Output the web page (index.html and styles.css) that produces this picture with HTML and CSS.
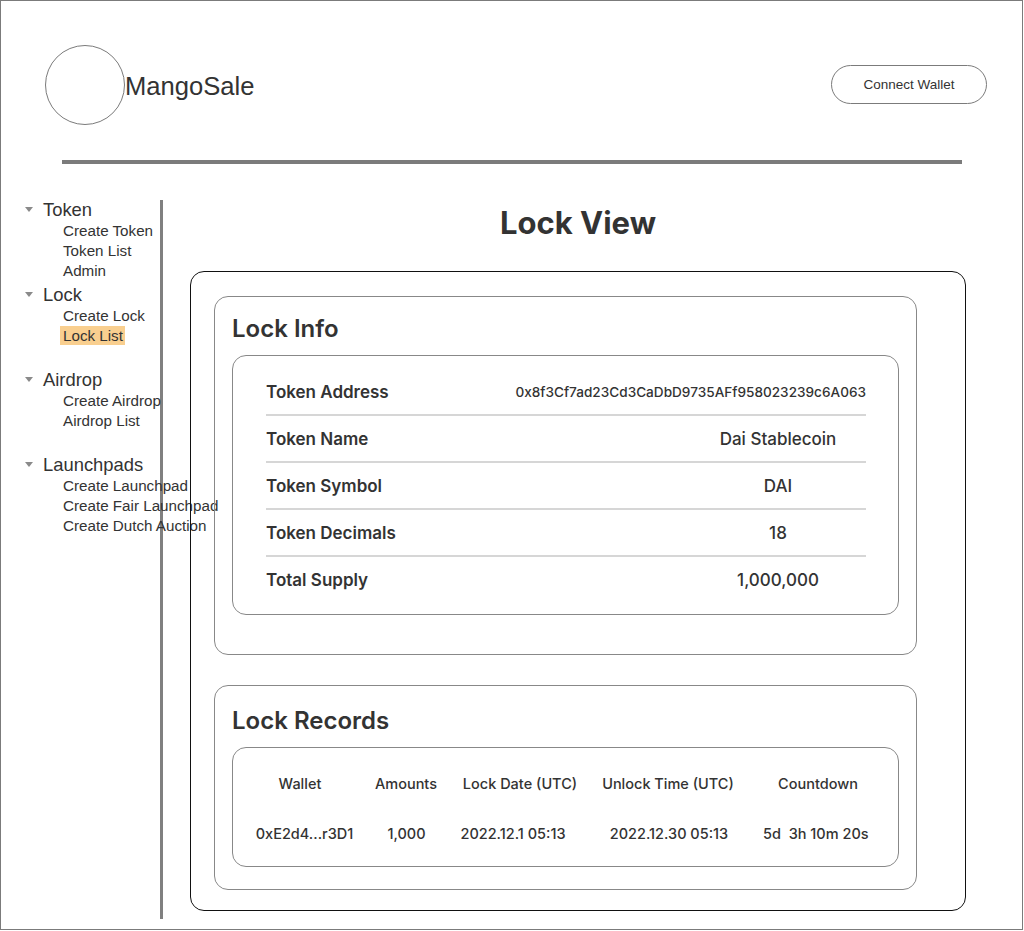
FILE: index.html
```html
<!DOCTYPE html>
<html lang="en">
<head>
<meta charset="utf-8">
<title>MangoSale - Lock View</title>
<link rel="stylesheet" href="styles.css">
</head>
<body>
<div class="frame">
  <header class="header">
    <div class="brand">
      <div class="logo"></div>
      <span class="brand-name">MangoSale</span>
    </div>
    <button class="connect">Connect Wallet</button>
  </header>
  <div class="rule"></div>
  <div class="body">
    <nav class="sidebar">
      <div class="group">
        <div class="group-title"><span class="caret"></span>Token</div>
        <div class="item">Create Token</div>
        <div class="item">Token List</div>
        <div class="item">Admin</div>
      </div>
      <div class="group">
        <div class="group-title"><span class="caret"></span>Lock</div>
        <div class="item">Create Lock</div>
        <div class="item"><span class="active">Lock List</span></div>
      </div>
      <div class="group">
        <div class="group-title"><span class="caret"></span>Airdrop</div>
        <div class="item">Create Airdrop</div>
        <div class="item">Airdrop List</div>
      </div>
      <div class="group">
        <div class="group-title"><span class="caret"></span>Launchpads</div>
        <div class="item">Create Launchpad</div>
        <div class="item">Create Fair Launchpad</div>
        <div class="item">Create Dutch Auction</div>
      </div>
    </nav>
    <main class="main">
      <h1 class="title">Lock View</h1>
      <div class="outer-card">
        <section class="card card-info">
          <h2 class="card-title">Lock Info</h2>
          <div class="box info-box">
            <div class="info-row">
              <span class="label">Token Address</span>
              <span class="value addr">0x8f3Cf7ad23Cd3CaDbD9735AFf958023239c6A063</span>
            </div>
            <div class="info-row">
              <span class="label">Token Name</span>
              <span class="value">Dai Stablecoin</span>
            </div>
            <div class="info-row">
              <span class="label">Token Symbol</span>
              <span class="value">DAI</span>
            </div>
            <div class="info-row">
              <span class="label">Token Decimals</span>
              <span class="value">18</span>
            </div>
            <div class="info-row">
              <span class="label">Total Supply</span>
              <span class="value">1,000,000</span>
            </div>
          </div>
        </section>
        <section class="card card-records">
          <h2 class="card-title">Lock Records</h2>
          <div class="box records-box">
            <div class="rec-row rec-head">
              <span>Wallet</span>
              <span>Amounts</span>
              <span>Lock Date (UTC)</span>
              <span>Unlock Time (UTC)</span>
              <span>Countdown</span>
            </div>
            <div class="rec-row rec-data">
              <span>0xE2d4...r3D1</span>
              <span>1,000</span>
              <span>2022.12.1 05:13</span>
              <span>2022.12.30 05:13</span>
              <span>5d&nbsp; 3h 10m 20s</span>
            </div>
          </div>
        </section>
      </div>
    </main>
  </div>
</div>
</body>
</html>
```

FILE: styles.css
```css
* { box-sizing: border-box; }

body {
  margin: 0;
  font-family: "Liberation Sans", Arial, sans-serif;
  color: #333;
  background: #fff;
}

.frame {
  width: 1023px;
  height: 930px;
  border: 1px solid #7b7b7b;
  overflow: hidden;
}

/* Header */
.header {
  display: flex;
  align-items: center;
  justify-content: space-between;
  padding: 44px 35px 0 44px;
}

.brand {
  display: flex;
  align-items: center;
}

.logo {
  width: 80px;
  height: 80px;
  border: 1px solid #7b7b7b;
  border-radius: 50%;
}

.brand-name {
  font-size: 25.6px;
  color: #333;
  margin-left: 0;
  margin-top: 2px;
}

.connect {
  width: 156px;
  height: 39px;
  border: 1px solid #7b7b7b;
  border-radius: 20px;
  background: #fff;
  font-family: "Liberation Sans", Arial, sans-serif;
  font-size: 13.5px;
  color: #333;
  padding: 0;
  margin-top: -1px;
}

.rule {
  width: 900px;
  height: 4px;
  background: #7b7b7b;
  margin: 35px 0 0 61px;
}

/* Body */
.body {
  display: flex;
  margin-top: 36px;
}

.sidebar {
  width: 162px;
  height: 719px;
  flex-shrink: 0;
  border-right: 3px solid #808080;
  padding-left: 24px;
  white-space: nowrap;
}

.group {
  height: 85px;
}

.group-title {
  display: flex;
  align-items: center;
  height: 20px;
  font-size: 18.4px;
  color: #333;
}

.caret {
  width: 0;
  height: 0;
  border-left: 4.5px solid transparent;
  border-right: 4.5px solid transparent;
  border-top: 5px solid #8a8a8a;
  margin-right: 10px;
  margin-top: -2px;
}

.item {
  height: 20px;
  line-height: 21px;
  font-size: 15.2px;
  padding-left: 38px;
  color: #333;
}

.active {
  display: inline-block;
  background: #f9cf8f;
  padding: 0 2px 0 3px;
  margin-left: -3px;
  line-height: 20px;
  height: 19px;
  margin-top: 1px;
  vertical-align: top;
}

/* Main */
.main {
  flex: 1;
  padding: 0 56px 0 27px;
  font-family: Inter, "Liberation Sans", sans-serif;
}

.title {
  margin: 5px 0 30px;
  height: 36px;
  line-height: 36px;
  text-align: center;
  font-size: 31px;
  font-weight: 700;
  color: #333;
}

.outer-card {
  border: 1px solid #111;
  border-radius: 14px;
  padding: 24px 48px 20px 23px;
}

.card {
  border: 1px solid #888;
  border-radius: 14px;
  padding: 17px 17px 39px;
}

.card-records {
  margin-top: 30px;
  padding: 20px 17px 22px;
}

.card-title {
  margin: 0 0 11px;
  height: 30px;
  line-height: 30px;
  font-size: 24px;
  font-weight: 600;
  color: #333;
}

.box {
  border: 1px solid #888;
  border-radius: 14px;
}

.info-box {
  padding: 13px 32px 12px 33px;
}

.info-row {
  display: flex;
  align-items: center;
  justify-content: space-between;
  height: 47px;
  border-bottom: 2px solid #d6d6d6;
  padding-top: 1px;
  white-space: nowrap;
}

.info-row:last-child {
  border-bottom: none;
  height: 45px;
}

.label {
  font-size: 17px;
  font-weight: 600;
}

.value {
  width: 176px;
  text-align: center;
  font-size: 17px;
  font-weight: 500;
}

.value.addr {
  width: auto;
  font-size: 13.6px;
  font-weight: 500;
}

.records-box {
  padding: 10px 0 8px 14px;
}

.rec-row {
  display: grid;
  height: 50px;
  align-items: center;
  font-size: 14.5px;
  font-weight: 500;
  white-space: nowrap;
}

.rec-head {
  grid-template-columns: 106px 106px 122px 174px 126px;
  padding-top: 1px;
}

.rec-data {
  grid-template-columns: 115px 89px 124px 188px 96px;
}

.rec-row span {
  text-align: center;
}
```
